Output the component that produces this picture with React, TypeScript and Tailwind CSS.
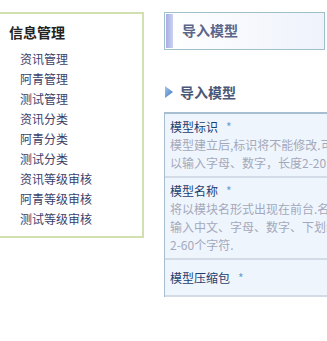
const font = "font-['SimSun','Noto_Sans_CJK_SC',sans-serif]"

const menu = ["资讯管理", "阿青管理", "测试管理", "资讯分类", "阿青分类", "测试分类", "资讯等级审核", "阿青等级审核", "测试等级审核"]

const rows = [
	{ label: "模型标识", desc: ["模型建立后,标识将不能修改.可", "以输入字母、数字，长度2-20个字符."] },
	{ label: "模型名称", desc: ["将以模块名形式出现在前台.名称可以", "输入中文、字母、数字、下划线，长度", "2-60个字符."] },
	{ label: "模型压缩包", desc: [] as string[] },
]

const App = () => {
	return (
		<div className={`flex w-[327px] h-[341px] overflow-hidden bg-white ${font}`}>
			<aside className="mt-[12px] w-[144px] h-[226px] shrink-0 border-y-2 border-r-2 border-[#d2dfae] bg-white">
				<h2 className="pl-[9px] pt-[9px] text-[14px] leading-[18px] font-bold text-[#222]">信息管理</h2>
				<ul className="mt-[8px] pl-[20px]">
					{menu.map((m) => (
						<li key={m} className="h-[20px] text-[12px] leading-[20px] text-[#3b3f6b]">
							{m}
						</li>
					))}
				</ul>
			</aside>
			<main className="ml-[20px] w-[200px] shrink-0">
				<div className="mt-[12px] flex h-[38px] w-[161px] border border-[#9fbfcb] bg-gradient-to-r from-white to-[#eef2fb] p-px">
					<div className="w-[7px] bg-gradient-to-r from-[#a6aee4] to-[#cbd2f2]" />
					<h1 className="pl-[9px] text-[14px] leading-[32px] font-bold text-[#5b6689]">导入模型</h1>
				</div>
				<div className="mt-[33px] flex items-center gap-[7px] pl-[1px]">
					<svg width="8" height="12" viewBox="0 0 8 12">
						<defs>
							<linearGradient id="tri" x1="0" y1="0" x2="1" y2="1">
								<stop offset="0" stopColor="#a7c9ee" />
								<stop offset="1" stopColor="#3a72c4" />
							</linearGradient>
						</defs>
						<path d="M0 0 L8 6 L0 12 Z" fill="url(#tri)" />
					</svg>
					<h3 className="text-[14px] leading-[18px] font-bold text-[#4a5878]">导入模型</h3>
				</div>
				<div className="mt-[11px] w-[200px] border-t-2 border-l border-[#a6bed0] bg-[#eff5fd]">
					{rows.map((r) => (
						<div
							key={r.label}
							className={`border-b-2 border-[#d3dbe6] pl-[5px] ${r.desc.length ? "pt-[4px] pb-[4px]" : "pt-[9px] pb-[8px]"}`}
						>
							<div className="text-[12px] leading-[18px] text-[#1b3f70]">
								{r.label}
								<span className="ml-[8px] text-[#6a9fd0]">*</span>
							</div>
							{r.desc.map((d) => (
								<div key={d} className="whitespace-nowrap text-[12px] leading-[18px] text-[#a3a9bb]">
									{d}
								</div>
							))}
						</div>
					))}
				</div>
			</main>
		</div>
	)
}

export default App
